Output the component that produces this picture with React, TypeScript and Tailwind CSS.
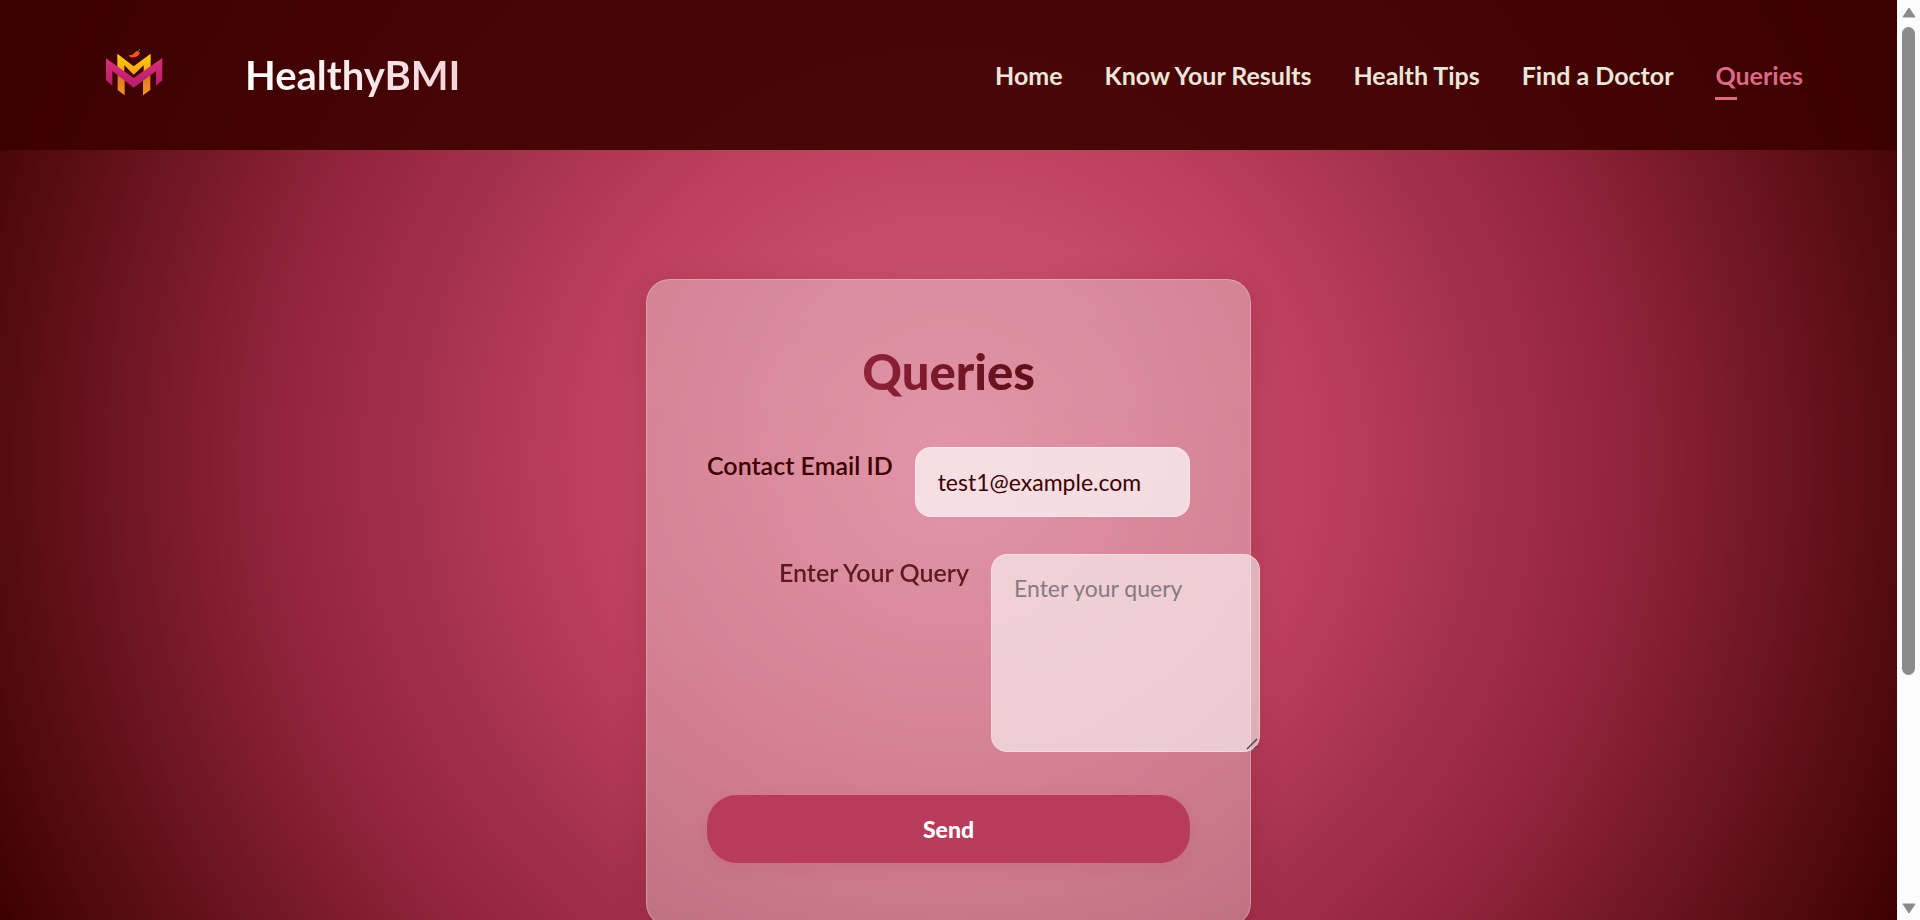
const links = ["Home", "Know Your Results", "Health Tips", "Find a Doctor"];

function Logo() {
  return (
    <svg viewBox="45 38 240 195" className="h-[65px] w-20 shrink-0" aria-label="Logo" role="img">
      <defs>
        <linearGradient id="gold" x1="0" y1="0" x2="0" y2="1">
          <stop offset="0" stopColor="#ffce0c" />
          <stop offset="1" stopColor="#f6a21c" />
        </linearGradient>
        <linearGradient id="orange" x1="0" y1="0" x2="0" y2="1">
          <stop offset="0" stopColor="#d9741d" />
          <stop offset="1" stopColor="#fb9228" />
        </linearGradient>
        <linearGradient id="magenta" x1="0" y1="0" x2="0" y2="1">
          <stop offset="0" stopColor="#dc2d78" />
          <stop offset="1" stopColor="#b51b6c" />
        </linearGradient>
      </defs>
      <path d="M112 70 161 108 212 70V110L191 125V105L161 133 133 105V125L112 110Z" fill="url(#gold)" />
      <path d="M113 130 134 147V195L113 179ZM211 130 189 147V195L211 179Z" fill="url(#orange)" />
      <path d="M78 84 161 143 247 83V150L228 166V123L161 172 97 122V166L78 150Z" fill="url(#magenta)" />
      <path d="M145 75C153 75 160 73 163 68C166 61 176 61 179 66C182 75 163 86 150 80Z" fill="#f4511f" />
      <path d="M172 64C176 64 177 60 179 56" fill="none" stroke="#6f8a2a" strokeWidth="3" />
    </svg>
  );
}

function Scrollbar() {
  return (
    <div aria-hidden="true" className="flex w-[23px] shrink-0 flex-col items-center bg-[#fcfcfc] pt-[7px] pb-1.5">
      <svg viewBox="0 0 14 11" className="h-[11px] w-3.5 shrink-0">
        <path d="M7 1 13 10H1Z" fill="#8b8b8b" stroke="#8b8b8b" strokeLinejoin="round" />
      </svg>
      <div className="mt-[9px] w-[13px] flex-1">
        <div className="h-3/4 rounded-full bg-[#8b8b8b]" />
      </div>
      <svg viewBox="0 0 14 11" className="mt-3 h-[11px] w-3.5 shrink-0">
        <path d="M7 10 13 1H1Z" fill="#8b8b8b" stroke="#8b8b8b" strokeLinejoin="round" />
      </svg>
    </div>
  );
}

export default function App() {
  return (
    <div className="flex h-screen font-['Lato',sans-serif] text-[25px] text-[#3c0000]">
      <div className="flex-1 overflow-x-hidden overflow-y-auto bg-[radial-gradient(circle_at_center,#d45f7a_0%,#bc3f5c_35%,#8f2339_65%,#3c0000_100%)] [scrollbar-width:none]">
        <header className="flex h-[150px] items-center bg-[#3c0000]/90 pr-[94px] pl-[95px]">
          <Logo />
          <span className="ml-[70px] bg-linear-to-r from-white to-[#f5d3d8] bg-clip-text text-[40px] leading-[60px] font-bold text-transparent">
            HealthyBMI
          </span>
          <nav className="ml-auto flex gap-[42px] leading-9 font-bold text-[#ece5d8]">
            {links.map((label) => (
              <a key={label} href="#">{label}</a>
            ))}
            <a href="#" aria-current="page" className="relative text-[#dc6a84]">
              Queries
              <span className="absolute -bottom-[7px] left-0 h-[3px] w-[22px] bg-[#dc6a84]" />
            </a>
          </nav>
        </header>

        <main className="flex justify-center pt-[129px] pb-[300px]">
          <section className="w-[605px] rounded-3xl border border-white/25 bg-linear-to-b from-white/35 to-white/32 px-[60px] pt-[55px] pb-[63px] shadow-[0_8px_32px_rgba(60,0,0,0.15)]">
            <h1 className="mx-auto mb-10 w-fit bg-linear-to-r from-[#8f2339] to-[#5f0d18] bg-clip-text text-[49px] leading-[72px] font-black text-transparent">
              Queries
            </h1>
            <form>
              <div className="flex items-start gap-[22px]">
                <label htmlFor="email" className="shrink-0 leading-9 font-semibold">Contact Email ID</label>
                <input
                  id="email"
                  type="email"
                  defaultValue="test1@example.com"
                  className="h-[70px] min-w-0 flex-1 rounded-2xl border border-white/30 bg-white/70 px-[22px] text-[23px]"
                />
              </div>
              <div className="mt-[37px] -mr-[70px] flex items-start justify-end gap-[22px]">
                <label htmlFor="query" className="shrink-0 leading-9 font-semibold opacity-80">Enter Your Query</label>
                <div className="relative shrink-0">
                  <textarea
                    id="query"
                    placeholder="Enter your query"
                    className="block h-[198px] w-[269px] resize-none rounded-2xl border border-white/30 bg-white/60 px-[22px] py-4 text-[23px] placeholder:text-[#877b80]"
                  />
                  <svg viewBox="0 0 12 12" className="pointer-events-none absolute right-0.5 bottom-0.5 size-3" aria-hidden="true">
                    <path d="M1 11 11 1M8 11 11 8" stroke="#5c454c" strokeWidth="1.5" />
                  </svg>
                </div>
              </div>
              <button
                type="submit"
                className="mt-[43px] h-[68px] w-full rounded-[30px] bg-[#b83b5c] text-[23px] font-black text-white shadow-[0_4px_16px_rgba(184,59,92,0.15)]"
              >
                Send
              </button>
            </form>
          </section>
        </main>
      </div>
      <Scrollbar />
    </div>
  );
}
